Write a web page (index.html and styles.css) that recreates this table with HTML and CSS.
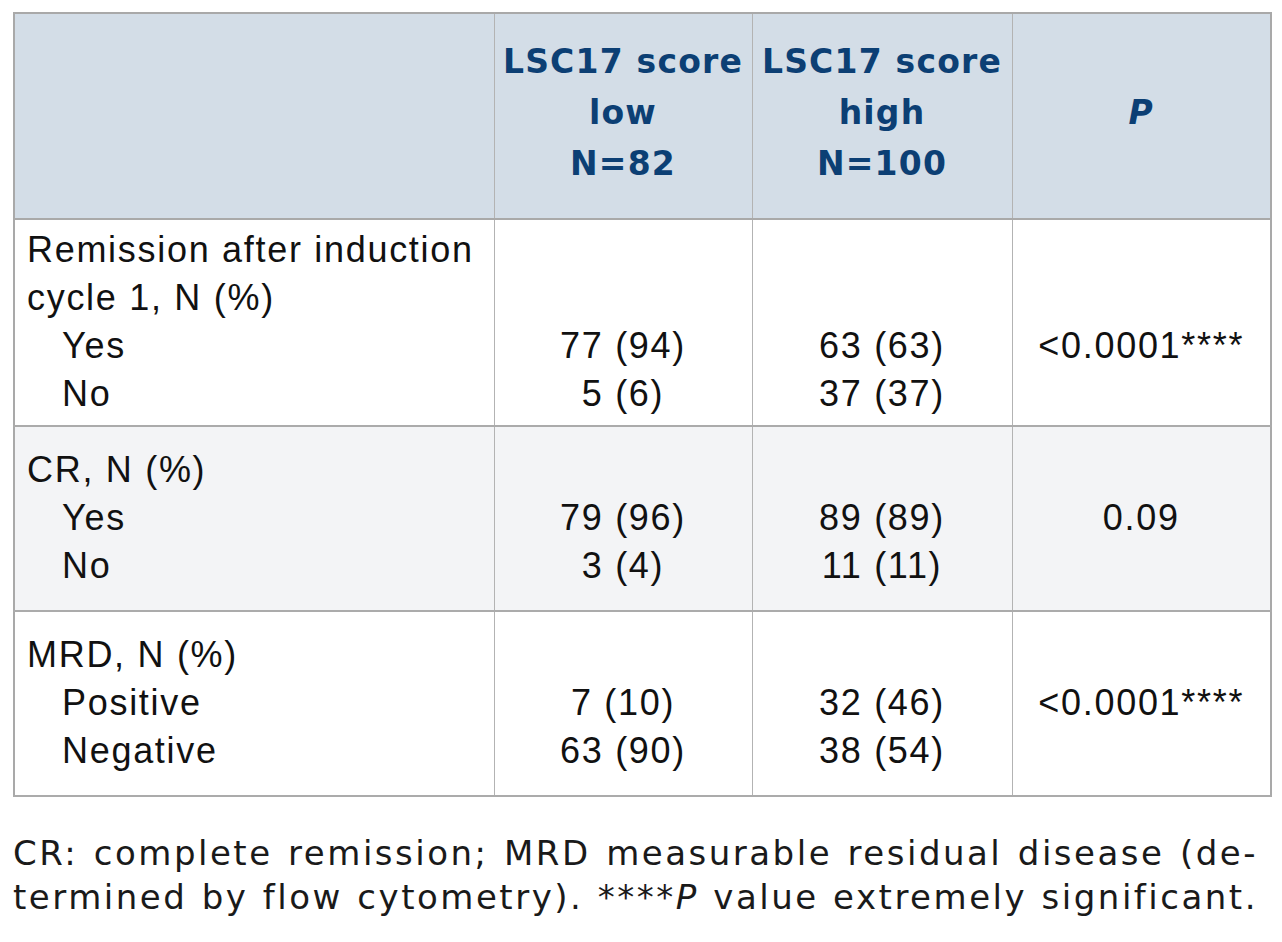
FILE: index.html
```html
<!DOCTYPE html>
<html lang="en">
<head>
<meta charset="utf-8">
<title>LSC17 score outcomes</title>
<link rel="stylesheet" href="styles.css">
</head>
<body>
<div class="page">
  <table class="stats">
    <colgroup>
      <col class="c-label">
      <col class="c-low">
      <col class="c-high">
      <col class="c-p">
    </colgroup>
    <thead>
      <tr>
        <th></th>
        <th><div class="hl">LSC17 score</div><div class="hl">low</div><div class="hl">N=82</div></th>
        <th><div class="hl">LSC17 score</div><div class="hl">high</div><div class="hl">N=100</div></th>
        <th><i>P</i></th>
      </tr>
    </thead>
    <tbody>
      <tr class="r1">
        <td class="label">
          <div class="ln">Remission after induction</div>
          <div class="ln">cycle 1, N (%)</div>
          <div class="ln sub">Yes</div>
          <div class="ln sub">No</div>
        </td>
        <td class="num">
          <div class="ln">&nbsp;</div>
          <div class="ln">&nbsp;</div>
          <div class="ln">77 (94)</div>
          <div class="ln">5 (6)</div>
        </td>
        <td class="num">
          <div class="ln">&nbsp;</div>
          <div class="ln">&nbsp;</div>
          <div class="ln">63 (63)</div>
          <div class="ln">37 (37)</div>
        </td>
        <td class="num">
          <div class="ln">&nbsp;</div>
          <div class="ln">&nbsp;</div>
          <div class="ln">&lt;0.0001****</div>
          <div class="ln">&nbsp;</div>
        </td>
      </tr>
      <tr class="r2 alt">
        <td class="label">
          <div class="ln">CR, N (%)</div>
          <div class="ln sub">Yes</div>
          <div class="ln sub">No</div>
        </td>
        <td class="num">
          <div class="ln">&nbsp;</div>
          <div class="ln">79 (96)</div>
          <div class="ln">3 (4)</div>
        </td>
        <td class="num">
          <div class="ln">&nbsp;</div>
          <div class="ln">89 (89)</div>
          <div class="ln">11 (11)</div>
        </td>
        <td class="num">
          <div class="ln">&nbsp;</div>
          <div class="ln">0.09</div>
          <div class="ln">&nbsp;</div>
        </td>
      </tr>
      <tr class="r3">
        <td class="label">
          <div class="ln">MRD, N (%)</div>
          <div class="ln sub">Positive</div>
          <div class="ln sub">Negative</div>
        </td>
        <td class="num">
          <div class="ln">&nbsp;</div>
          <div class="ln">7 (10)</div>
          <div class="ln">63 (90)</div>
        </td>
        <td class="num">
          <div class="ln">&nbsp;</div>
          <div class="ln">32 (46)</div>
          <div class="ln">38 (54)</div>
        </td>
        <td class="num">
          <div class="ln">&nbsp;</div>
          <div class="ln">&lt;0.0001****</div>
          <div class="ln">&nbsp;</div>
        </td>
      </tr>
    </tbody>
  </table>
  <p class="note">CR: complete remission; MRD measurable residual disease (de-<br>termined by flow cytometry). ****<i>P</i> value extremely significant.</p>
</div>
</body>
</html>
```

FILE: styles.css
```css
html, body {
  margin: 0;
  padding: 0;
  background: #ffffff;
}

.page {
  padding: 12px 0 0 13px;
}

.stats {
  border-collapse: collapse;
  table-layout: fixed;
  width: 1257px;
  border: 2px solid #a9a9a9;
}

.c-label { width: 480px; }
.c-low { width: 258px; }
.c-high { width: 260px; }
.c-p { width: 259px; }

.stats th {
  background: #d3dde7;
  color: #0c3f74;
  font-family: "DejaVu Sans", sans-serif;
  font-weight: bold;
  font-size: 33px;
  line-height: 51px;
  letter-spacing: 1.2px;
  text-align: center;
  vertical-align: middle;
  padding: 22px 0 29px;
  border-left: 1px solid #b3b3b3;
  border-right: 1px solid #b3b3b3;
  border-bottom: 2px solid #a9a9a9;
  white-space: nowrap;
}

.stats th i {
  font-style: italic;
}

.hl {
  display: block;
}

.stats td {
  font-family: "Liberation Sans", Arial, sans-serif;
  font-size: 36px;
  line-height: 48px;
  letter-spacing: 1.7px;
  color: #111111;
  vertical-align: middle;
  padding: 6px 12px 7px;
  border-left: 1px solid #b3b3b3;
  border-right: 1px solid #b3b3b3;
  border-bottom: 2px solid #ababab;
  white-space: nowrap;
}

.stats td.num {
  text-align: center;
  padding-left: 4px;
  padding-right: 4px;
}

.stats td.label {
  text-align: left;
}

.ln {
  display: block;
}

.ln.sub {
  padding-left: 35px;
}

.alt td {
  background: #f3f4f6;
}

.r2 {
  height: 185px;
}

.r3 {
  height: 185px;
}

.note {
  margin: 34px 0 0 0;
  width: 1245px;
  font-family: "DejaVu Sans", sans-serif;
  font-size: 34px;
  line-height: 44px;
  letter-spacing: 2.5px;
  color: #1a1a1a;
  text-align: justify;
  text-align-last: justify;
  white-space: nowrap;
}

.note i {
  font-style: italic;
}
```
